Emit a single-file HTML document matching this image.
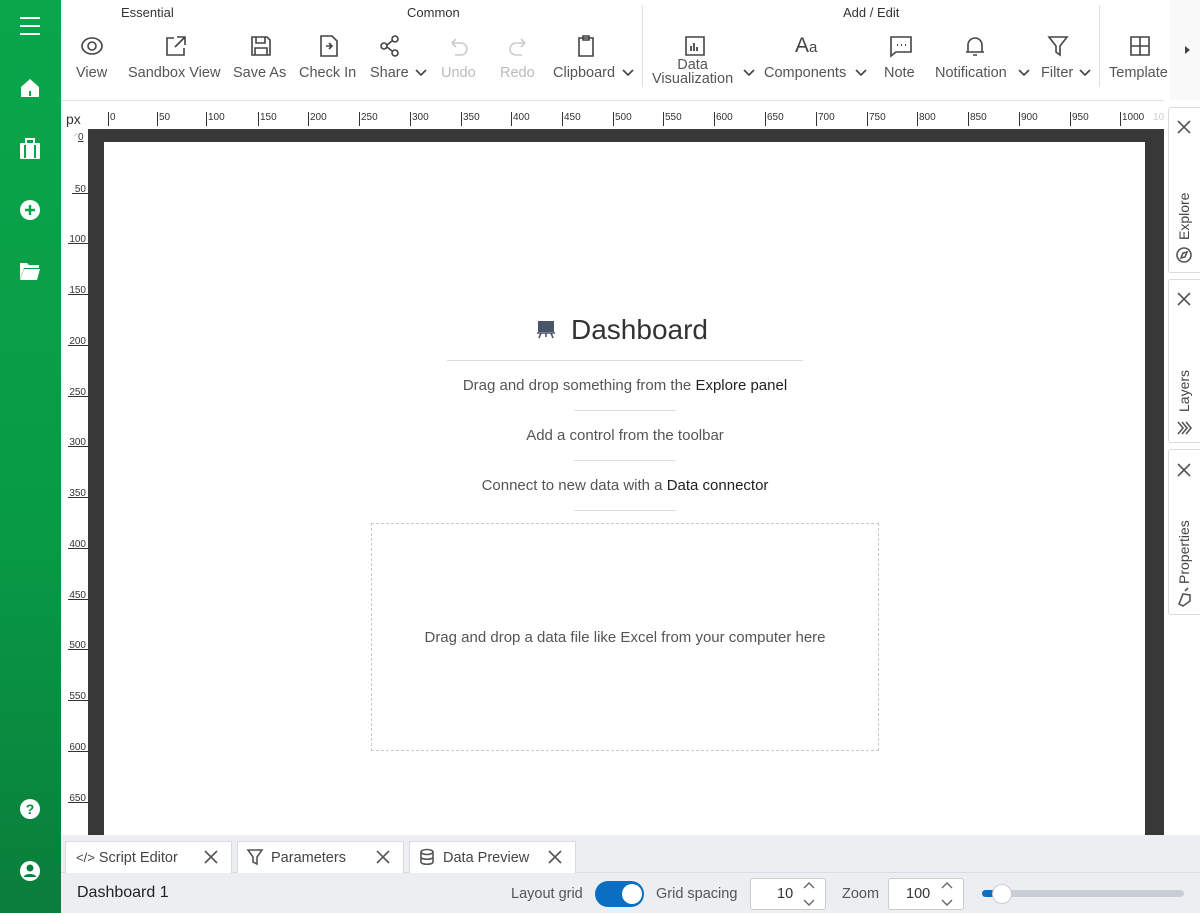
<!DOCTYPE html>
<html><head><meta charset="utf-8"><style>
*{box-sizing:border-box;margin:0;padding:0}
body{width:1200px;height:913px;overflow:hidden;font-family:"Liberation Sans",sans-serif;background:#fff;position:relative;color:#333}
.a{position:absolute}
#side{left:0;top:0;width:61px;height:913px;background:linear-gradient(#0aa64b,#089a45 60%,#0a7d3b)}
.tb{font-size:14.5px;color:#555;white-space:nowrap}
.ic{stroke:#444;fill:none;stroke-width:1.6}
.grp{font-size:13px;color:#333}
.hint{font-size:15px;color:#555;text-align:center;width:100%}
.hint b{font-weight:normal;color:#222}
.sep{height:1px;background:#ddd}
.btab{top:841px;height:32px;background:#fff;border:1px solid #d8dbe0;border-bottom:none;font-size:14.5px;color:#444;line-height:32px}
.rt{left:1168px;width:32px;background:#fff;border:1px solid #d8dbe0;border-right:none;border-radius:3px 0 0 3px}
.vt{position:absolute;transform:rotate(-90deg);transform-origin:left top;font-size:14px;color:#444;white-space:nowrap}
</style></head><body>
<div id="side" class="a">
<svg class="a" style="left:19px;top:16px" width="22" height="20"><path d="M1 2h20M1 10h20M1 18h20" stroke="#fff" stroke-width="2"/></svg>
<svg class="a" style="left:20px;top:78px" width="20" height="20"><path d="M10 1L1 9v10h18V9z" fill="#fff"/><rect x="9" y="13" width="2" height="5" fill="#0aa64b"/></svg>
<svg class="a" style="left:19px;top:138px" width="22" height="22"><rect x="1" y="5" width="20" height="16" rx="1" fill="#fff"/><path d="M7 5V1h8v4" stroke="#fff" stroke-width="2" fill="none"/><path d="M6 7v13M16 7v13" stroke="#0aa64b" stroke-width="2"/></svg>
<svg class="a" style="left:19px;top:199px" width="22" height="22"><circle cx="11" cy="11" r="10" fill="#fff"/><path d="M11 6v10M6 11h10" stroke="#0aa64b" stroke-width="2.4"/></svg>
<svg class="a" style="left:19px;top:261px" width="22" height="20"><path d="M1 2h7l2 2h10v3H5L1 18z" fill="#fff"/><path d="M5 8h16l-3 11H1z" fill="#fff"/></svg>
<svg class="a" style="left:19px;top:798px" width="22" height="22"><circle cx="11" cy="11" r="10" fill="#fff"/><text x="11" y="16" font-size="14" font-weight="bold" text-anchor="middle" fill="#0a8a40" font-family="Liberation Sans">?</text></svg>
<svg class="a" style="left:19px;top:860px" width="22" height="22"><circle cx="11" cy="11" r="10" fill="#fff"/><circle cx="11" cy="8" r="3.5" fill="#0a7d3b"/><path d="M4.5 17c2-4 11-4 13 0" fill="#0a7d3b"/></svg>
</div>

<div class="a" style="left:61px;top:0;width:1139px;height:101px;background:#fff;border-bottom:1px solid #e3e3e3"></div>
<div class="a grp" style="left:121px;top:5px">Essential</div>
<div class="a grp" style="left:407px;top:5px">Common</div>
<div class="a grp" style="left:843px;top:5px">Add / Edit</div>
<div class="a" style="left:642px;top:5px;width:1px;height:82px;background:#e0e0e0"></div>
<div class="a" style="left:1099px;top:5px;width:1px;height:82px;background:#e0e0e0"></div>
<div class="a" style="left:1170px;top:0;width:30px;height:100px;background:#f9f9f9"></div>
<svg class="a" style="left:1185px;top:46px" width="6" height="8"><path d="M0 0l5 4-5 4z" fill="#444"/></svg>

<svg class="a" style="left:80px;top:34px" width="24" height="24"><ellipse class="ic" cx="12" cy="12" rx="10" ry="8"/><circle class="ic" cx="12" cy="12" r="4"/></svg>
<svg class="a" style="left:164px;top:34px" width="24" height="24"><path class="ic" d="M10 4H3v17h17v-7M13 3h8v8M21 3l-10 10"/></svg>
<svg class="a" style="left:249px;top:34px" width="24" height="24"><path class="ic" d="M3 3h15l3 3v15H3zM7 3v6h9V3M6 21v-7h12v7"/></svg>
<svg class="a" style="left:317px;top:34px" width="24" height="24"><path class="ic" d="M4 2h11l5 5v15H4zM9 12h6M12 9l3 3-3 3"/></svg>
<svg class="a" style="left:378px;top:34px" width="24" height="24"><circle class="ic" cx="17" cy="5" r="3"/><circle class="ic" cx="6" cy="12" r="3"/><circle class="ic" cx="17" cy="19" r="3"/><path class="ic" d="M9 11l5-4M9 13l5 4"/></svg>
<svg class="a" style="left:447px;top:34px" width="24" height="24"><path d="M5 9h9a6 6 0 010 12H8M5 9l4-4M5 9l4 4" stroke="#ccc" stroke-width="1.6" fill="none"/></svg>
<svg class="a" style="left:506px;top:34px" width="24" height="24"><path d="M19 9h-9a6 6 0 000 12h6M19 9l-4-4M19 9l-4 4" stroke="#ccc" stroke-width="1.6" fill="none"/></svg>
<svg class="a" style="left:574px;top:34px" width="24" height="24"><path class="ic" d="M5 4h14v18H5zM9 2h6v4H9z"/></svg>
<svg class="a" style="left:683px;top:34px" width="24" height="24"><path class="ic" d="M3 3h18v18H3z"/><path d="M8 12v5M11 9v8M14 13v4" stroke="#444" stroke-width="1.8"/></svg>
<div class="a" style="left:795px;top:34px;font-size:21px;color:#444">A<span style="font-size:15px">a</span></div>
<svg class="a" style="left:889px;top:34px" width="24" height="24"><path class="ic" d="M2 3h20v15H7l-5 4z"/><path d="M8 11h1M12 11h1M16 11h1" stroke="#444" stroke-width="2"/></svg>
<svg class="a" style="left:963px;top:34px" width="24" height="24"><path class="ic" d="M5 18V11a7 7 0 0114 0v7zM3 18h18M10 21h4"/></svg>
<svg class="a" style="left:1046px;top:34px" width="24" height="24"><path class="ic" d="M3 3h18l-7 9v9l-4-3v-6z"/></svg>
<svg class="a" style="left:1128px;top:34px" width="24" height="24"><path class="ic" d="M3 3h18v18H3zM12 3v18M3 12h18"/></svg>

<div class="a tb" style="left:76px;top:65px">View</div>
<div class="a tb" style="left:128px;top:65px">Sandbox View</div>
<div class="a tb" style="left:233px;top:65px">Save As</div>
<div class="a tb" style="left:299px;top:65px">Check In</div>
<div class="a tb" style="left:370px;top:65px">Share</div>
<div class="a tb" style="left:441px;top:65px;color:#bbb">Undo</div>
<div class="a tb" style="left:500px;top:65px;color:#bbb">Redo</div>
<div class="a tb" style="left:553px;top:65px">Clipboard</div>
<div class="a tb" style="left:652px;top:58px;text-align:center;line-height:14px">Data<br>Visualization</div>
<div class="a tb" style="left:764px;top:65px">Components</div>
<div class="a tb" style="left:884px;top:65px">Note</div>
<div class="a tb" style="left:935px;top:65px">Notification</div>
<div class="a tb" style="left:1041px;top:65px">Filter</div>
<div class="a tb" style="left:1109px;top:65px">Template</div>
<svg class="a" style="left:0;top:0" width="1200" height="100"><g stroke="#444" stroke-width="1.6" fill="none"><path d="M416 70l5 5 5-5M623 70l5 5 5-5M744 70l5 5 5-5M856 70l5 5 5-5M1019 70l5 5 5-5M1080 70l5 5 5-5"/></g></svg>

<div class="a" style="left:66px;top:111px;font-size:14px;color:#333">px</div>
<div class="a" style="left:73px;top:129px;color:#999;font-size:10px">&#x2E0D;<span style="color:#333;text-decoration:underline">0</span></div>
<svg class="a" style="left:0;top:100px" width="1165" height="30">
<g fill="#333" font-size="10" font-family="Liberation Sans">
<path stroke="#333" d="M108.5 12v14M157.5 12v14M206.5 12v14M258.5 12v14M308.5 12v14M359.5 12v14M410.5 12v14M461.5 12v14M511.5 12v14M562.5 12v14M613.5 12v14M663.5 12v14M714.5 12v14M765.5 12v14M816.5 12v14M867.5 12v14M917.5 12v14M968.5 12v14M1019.5 12v14M1070.5 12v14M1120.5 12v14"/>
<text x="110" y="20">0</text><text x="159" y="20">50</text><text x="208" y="20">100</text><text x="260" y="20">150</text><text x="310" y="20">200</text><text x="361" y="20">250</text><text x="412" y="20">300</text><text x="463" y="20">350</text><text x="513" y="20">400</text><text x="564" y="20">450</text><text x="615" y="20">500</text><text x="665" y="20">550</text><text x="716" y="20">600</text><text x="767" y="20">650</text><text x="818" y="20">700</text><text x="869" y="20">750</text><text x="919" y="20">800</text><text x="970" y="20">850</text><text x="1021" y="20">900</text><text x="1072" y="20">950</text><text x="1122" y="20">1000</text><text x="1153" y="20" fill="#ccc">10</text>
</g></svg>
<svg class="a" style="left:60px;top:140px" width="30" height="680">
<g fill="#333" font-size="10" font-family="Liberation Sans" text-anchor="end">
<text x="26" y="52">50</text><text x="26" y="102">100</text><text x="26" y="153">150</text><text x="26" y="204">200</text><text x="26" y="255">250</text><text x="26" y="305">300</text><text x="26" y="356">350</text><text x="26" y="407">400</text><text x="26" y="458">450</text><text x="26" y="508">500</text><text x="26" y="559">550</text><text x="26" y="610">600</text><text x="26" y="661">650</text>
<path stroke="#333" d="M12 53.5h16M8 103.5h20M8 154.5h20M8 205.5h20M8 256.5h20M8 306.5h20M8 357.5h20M8 408.5h20M8 459.5h20M8 509.5h20M8 560.5h20M8 611.5h20M8 662.5h20"/>
</g></svg>

<div class="a" style="left:88px;top:129px;width:1076px;height:706px;background:#383838"></div>
<div class="a" style="left:104px;top:142px;width:1041px;height:693px;background:#fff"></div>
<svg class="a" style="left:537px;top:320px" width="20" height="20"><rect x="1" y="1" width="16" height="11" fill="#4a5468"/><path d="M0 13h18M4 13l-2 5M14 13l2 5M9 13v4" stroke="#4a5468" stroke-width="1.6"/></svg>
<div class="a" style="left:571px;top:314px;font-size:28px;color:#333">Dashboard</div>
<div class="a sep" style="left:447px;top:360px;width:356px"></div>
<div class="a hint" style="left:0;top:377px;width:1250px">Drag and drop something from the <b>Explore panel</b></div>
<div class="a sep" style="left:574px;top:410px;width:102px"></div>
<div class="a hint" style="left:0;top:427px;width:1250px">Add a control from the toolbar</div>
<div class="a sep" style="left:574px;top:460px;width:102px"></div>
<div class="a hint" style="left:0;top:477px;width:1250px">Connect to new data with a <b>Data connector</b></div>
<div class="a sep" style="left:574px;top:510px;width:102px"></div>
<div class="a" style="left:371px;top:523px;width:508px;height:228px;border:1px dashed #c8c8c8"></div>
<div class="a hint" style="left:371px;top:629px;width:508px">Drag and drop a data file like Excel from your computer here</div>

<div class="a" style="left:1164px;top:100px;width:36px;height:735px;background:#fff"></div>
<div class="a rt" style="top:107px;height:166px"></div>
<div class="a rt" style="top:279px;height:164px"></div>
<div class="a rt" style="top:449px;height:166px"></div>
<svg class="a" style="left:1168px;top:100px" width="32" height="520"><g stroke="#555" stroke-width="1.6" fill="none"><path d="M10 21l12 12M22 21l-12 12M10 193l12 12M22 193l-12 12M10 364l12 12M22 364l-12 12"/><circle cx="16" cy="155" r="7"/><path d="M13 158l2-5 4-1-2 5z"/><path d="M10 322l5 6-5 6M14 322l5 6-5 6M18 322l5 6-5 6"/><path d="M11 504l4-10 7 1 0 6-7 5zM17 491l3-3"/></g></svg>
<div class="vt" style="left:1176px;top:240px">Explore</div>
<div class="vt" style="left:1176px;top:412px">Layers</div>
<div class="vt" style="left:1176px;top:584px">Properties</div>

<div class="a" style="left:61px;top:835px;width:1139px;height:78px;background:#eceef1"></div>
<div class="a" style="left:61px;top:872px;width:1139px;height:1px;background:#d8dbe0"></div>
<div class="a btab" style="left:65px;width:167px;padding-left:10px"><span style="font-size:13px">&lt;/&gt;</span> Script Editor</div>
<div class="a btab" style="left:237px;width:167px;padding-left:33px">Parameters</div>
<div class="a btab" style="left:409px;width:167px;padding-left:33px">Data Preview</div>
<svg class="a" style="left:0;top:841px" width="600" height="32"><g stroke="#555" stroke-width="1.6" fill="none"><path d="M205 10l12 12M217 10l-12 12M377 10l12 12M389 10l-12 12M549 10l12 12M561 10l-12 12"/><path d="M248 9h14l-5 7v7l-4-2v-5z"/><ellipse cx="427" cy="11" rx="6" ry="2.5"/><path d="M421 11v10c0 3 12 3 12 0V11M421 16c0 3 12 3 12 0"/></g></svg>
<div class="a" style="left:77px;top:884px;font-size:16px;color:#222">Dashboard 1</div>
<div class="a" style="left:511px;top:886px;font-size:14.5px;color:#555">Layout grid</div>
<div class="a" style="left:595px;top:881px;width:49px;height:26px;border-radius:13px;background:#0a6fc2"></div>
<div class="a" style="left:622px;top:884px;width:20px;height:20px;border-radius:50%;background:#fff"></div>
<div class="a" style="left:656px;top:886px;font-size:14.5px;color:#555">Grid spacing</div>
<div class="a" style="left:750px;top:878px;width:76px;height:32px;background:#fff;border:1px solid #ccc;border-radius:3px;font-size:14.5px;line-height:30px;padding-left:26px">10</div>
<div class="a" style="left:842px;top:886px;font-size:14.5px;color:#555">Zoom</div>
<div class="a" style="left:888px;top:878px;width:76px;height:32px;background:#fff;border:1px solid #ccc;border-radius:3px;font-size:14.5px;line-height:30px;padding-left:17px">100</div>
<svg class="a" style="left:800px;top:878px" width="170" height="32"><g stroke="#666" stroke-width="1.4" fill="none"><path d="M4 10l5-5 5 5M4 22l5 5 5-5M142 10l5-5 5 5M142 22l5 5 5-5"/></g></svg>
<div class="a" style="left:982px;top:890px;width:202px;height:7px;border-radius:4px;background:#c9ced6"></div>
<div class="a" style="left:982px;top:890px;width:18px;height:7px;border-radius:4px;background:#0a6fc2"></div>
<div class="a" style="left:992px;top:884px;width:20px;height:20px;border-radius:50%;background:#fff;border:1px solid #ccc"></div>
</body></html>
